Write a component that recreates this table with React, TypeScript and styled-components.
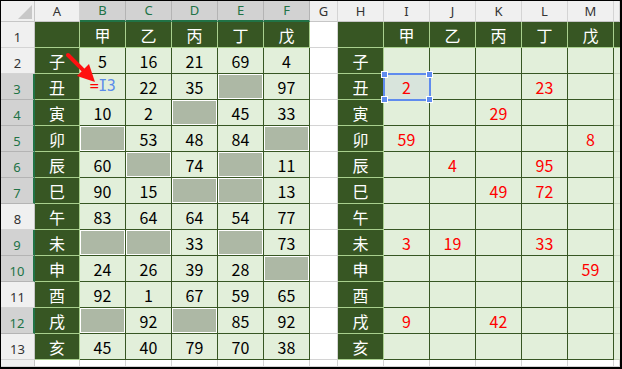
import React from 'react';
import styled, { createGlobalStyle, css } from 'styled-components';

const GlobalStyle = createGlobalStyle`
  html, body { margin: 0; padding: 0; background: #fff; }
  body { font-family: "Noto Sans CJK TC", "Noto Sans", sans-serif; }
  * { box-sizing: border-box; }
`;

const Frame = styled.div`
  position: relative;
  width: 622px;
  height: 369px;
  border-style: solid;
  border-color: #000;
  border-width: 1px 2px 2px 1px;
  overflow: hidden;
  background: #fff;
`;

const Sheet = styled.div`
  display: grid;
  grid-template-columns: 34px 45px repeat(5, 46px) 28px 46px repeat(5, 46px) 1fr;
  grid-template-rows: 21px repeat(13, 26px) 1fr;
  width: 100%;
  height: 100%;
`;

const Corner = styled.div`
  display: flex;
  align-items: flex-end;
  justify-content: flex-end;
  padding: 0 2px 2px 0;
  background: #f0f0f0;
  border-right: 1px solid #c6c6c6;
  border-bottom: 1px solid #c6c6c6;
`;

const ColHeader = styled.div<{ $sel?: boolean }>`
  display: flex;
  align-items: center;
  justify-content: center;
  font-family: "Noto Sans", "Liberation Sans", sans-serif;
  font-size: 13px;
  padding-bottom: 1px;
  background: ${(p) => (p.$sel ? '#d2d2d2' : '#f0f0f0')};
  color: ${(p) => (p.$sel ? '#217346' : '#333')};
  border-right: 1px solid ${(p) => (p.$sel ? '#b4b4b4' : '#d4d4d4')};
  border-bottom: ${(p) => (p.$sel ? '2px solid #217346' : '1px solid #c6c6c6')};
`;

const RowHeader = styled.div<{ $sel?: boolean }>`
  display: flex;
  align-items: center;
  justify-content: center;
  padding-top: 4px;
  font-family: "Noto Sans", "Liberation Sans", sans-serif;
  font-size: 13px;
  background: ${(p) => (p.$sel ? '#d2d2d2' : '#f0f0f0')};
  color: ${(p) => (p.$sel ? '#217346' : '#333')};
  border-bottom: 1px solid ${(p) => (p.$sel ? '#b4b4b4' : '#d4d4d4')};
  border-right: ${(p) => (p.$sel ? '2px solid #217346' : '1px solid #c6c6c6')};
`;

type Kind = 'dark' | 'light' | 'gray' | 'blank' | 'active';

const kindStyles: Record<Kind, ReturnType<typeof css>> = {
  dark: css`
    background: #375623;
    color: #fff;
    border-right: 1px solid #a9d08e;
    border-bottom: 1px solid #a9d08e;
  `,
  light: css`
    background: #e2efda;
    border-right: 1px solid #375623;
    border-bottom: 1px solid #375623;
  `,
  gray: css`
    background: #adb8a5;
    border-right: 1px solid #375623;
    border-bottom: 1px solid #375623;
    box-shadow: inset 1px 1px 0 #fff, inset -1px -1px 0 #fff;
  `,
  active: css`
    background: #d8e4dc;
    border-right: 1px solid #375623;
    border-bottom: 1px solid #375623;
  `,
  blank: css`
    background: #fff;
    border-right: 1px solid #d4d4d4;
    border-bottom: 1px solid #d4d4d4;
  `,
};

const Cell = styled.div<{ $kind: Kind; $red?: boolean }>`
  position: relative;
  display: flex;
  align-items: center;
  justify-content: center;
  font-size: 16px;
  line-height: 1;
  color: ${(p) => (p.$red ? '#ff0000' : '#000')};
  ${(p) => kindStyles[p.$kind]}
`;

const EdgeCell = styled.div<{ $dark?: boolean }>`
  background: ${(p) => (p.$dark ? '#375623' : '#e2efda')};
  border-bottom: 1px solid ${(p) => (p.$dark ? '#a9d08e' : '#c9d6c0')};
`;

const Formula = styled.span`
  font-family: "DejaVu Sans Mono", "Liberation Mono", monospace;
  font-size: 15px;
  color: #5b8bea;
  letter-spacing: -0.5px;
`;

const Eq = styled.span`
  color: #ff0000;
`;

const RefBox = styled.div`
  position: absolute;
  z-index: 2;
  top: -1px;
  left: -1px;
  right: -2px;
  bottom: -2px;
  border: 2px solid #5f8bee;
`;

const Handle = styled.span<{ $top: boolean; $left: boolean }>`
  position: absolute;
  width: 7px;
  height: 7px;
  background: #5f8bee;
  border: 1px solid #fff;
  ${(p) => (p.$top ? 'top: -4px;' : 'bottom: -4px;')}
  ${(p) => (p.$left ? 'left: -4px;' : 'right: -4px;')}
`;

const ArrowSvg = styled.svg`
  position: absolute;
  left: 0;
  top: 0;
  z-index: 3;
  pointer-events: none;
`;

const stems = ['甲', '乙', '丙', '丁', '戊'];
const branches = ['子', '丑', '寅', '卯', '辰', '巳', '午', '未', '申', '酉', '戌', '亥'];

// G = gray (selected blank), F = formula cell
const leftData: string[][] = [
  ['5', '16', '21', '69', '4'],
  ['F', '22', '35', 'G', '97'],
  ['10', '2', 'G', '45', '33'],
  ['G', '53', '48', '84', 'G'],
  ['60', 'G', '74', 'G', '11'],
  ['90', '15', 'G', 'G', '13'],
  ['83', '64', '64', '54', '77'],
  ['G', 'G', '33', 'G', '73'],
  ['24', '26', '39', '28', 'G'],
  ['92', '1', '67', '59', '65'],
  ['G', '92', 'G', '85', '92'],
  ['45', '40', '79', '70', '38'],
];

const rightData: string[][] = [
  ['', '', '', '', ''],
  ['2', '', '', '23', ''],
  ['', '', '29', '', ''],
  ['59', '', '', '', '8'],
  ['', '4', '', '95', ''],
  ['', '', '49', '72', ''],
  ['', '', '', '', ''],
  ['3', '19', '', '33', ''],
  ['', '', '', '', '59'],
  ['', '', '', '', ''],
  ['9', '', '42', '', ''],
  ['', '', '', '', ''],
];

const colLetters = ['A', 'B', 'C', 'D', 'E', 'F', 'G', 'H', 'I', 'J', 'K', 'L', 'M', ''];
const selCols = new Set(['B', 'C', 'D', 'E', 'F']);
const selRows = new Set([3, 4, 5, 6, 7, 9, 10, 12]);

function Arrow() {
  const sx = 67, sy = 54, tx = 94, ty = 81;
  const len = 17, half = 8.5;
  const dx = tx - sx, dy = ty - sy;
  const d = Math.hypot(dx, dy);
  const ux = dx / d, uy = dy / d;
  const bx = tx - ux * len, by = ty - uy * len;
  const px = -uy, py = ux;
  const pts = `${tx},${ty} ${bx + px * half},${by + py * half} ${bx - px * half},${by - py * half}`;
  return (
    <ArrowSvg width="120" height="100" viewBox="0 0 120 100">
      <line x1={sx} y1={sy} x2={bx + ux} y2={by + uy} stroke="#ff1010" strokeWidth="4" strokeLinecap="round" />
      <polygon points={pts} fill="#ff1010" />
    </ArrowSvg>
  );
}

export default function App() {
  const rows: React.ReactNode[] = [];
  for (let r = 1; r <= 13; r++) {
    const cells: React.ReactNode[] = [];
    cells.push(
      <RowHeader key={`rh${r}`} $sel={selRows.has(r)}>
        {r}
      </RowHeader>
    );
    cells.push(
      <Cell key={`A${r}`} $kind="dark">
        {r === 1 ? '' : branches[r - 2]}
      </Cell>
    );
    for (let c = 0; c < 5; c++) {
      if (r === 1) {
        cells.push(
          <Cell key={`L${r}-${c}`} $kind="dark">
            {stems[c]}
          </Cell>
        );
      } else {
        const v = leftData[r - 2][c];
        if (v === 'G') cells.push(<Cell key={`L${r}-${c}`} $kind="gray" />);
        else if (v === 'F')
          cells.push(
            <Cell key={`L${r}-${c}`} $kind="light">
              <Formula>
                <Eq>=</Eq>I3
              </Formula>
            </Cell>
          );
        else
          cells.push(
            <Cell key={`L${r}-${c}`} $kind="light">
              {v}
            </Cell>
          );
      }
    }
    cells.push(<Cell key={`G${r}`} $kind="blank" />);
    cells.push(
      <Cell key={`H${r}`} $kind="dark">
        {r === 1 ? '' : branches[r - 2]}
      </Cell>
    );
    for (let c = 0; c < 5; c++) {
      if (r === 1) {
        cells.push(
          <Cell key={`R${r}-${c}`} $kind="dark">
            {stems[c]}
          </Cell>
        );
      } else {
        const v = rightData[r - 2][c];
        const isRef = r === 3 && c === 0;
        cells.push(
          <Cell key={`R${r}-${c}`} $kind={isRef ? 'active' : 'light'} $red>
            {v}
            {isRef && (
              <RefBox>
                <Handle $top $left />
                <Handle $top $left={false} />
                <Handle $top={false} $left />
                <Handle $top={false} $left={false} />
              </RefBox>
            )}
          </Cell>
        );
      }
    }
    cells.push(<EdgeCell key={`N${r}`} $dark={r === 1} />);
    rows.push(<React.Fragment key={`row${r}`}>{cells}</React.Fragment>);
  }

  return (
    <>
      <GlobalStyle />
      <Frame>
        <Sheet>
          <Corner>
            <svg width="14" height="14" viewBox="0 0 14 14">
              <polygon points="14,0 14,14 0,14" fill="#c8c8c8" />
            </svg>
          </Corner>
          {colLetters.map((l, i) => (
            <ColHeader key={`ch${i}`} $sel={selCols.has(l)}>
              {l}
            </ColHeader>
          ))}
          {rows}
          <RowHeader />
          {colLetters.map((_, i) => (
            <Cell key={`z${i}`} $kind="blank" />
          ))}
        </Sheet>
        <Arrow />
      </Frame>
    </>
  );
}
